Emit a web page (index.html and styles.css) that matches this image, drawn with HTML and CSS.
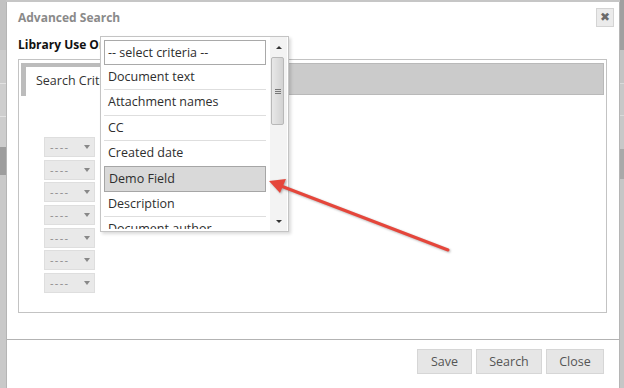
FILE: index.html
```html
<!DOCTYPE html>
<html>
<head>
<meta charset="utf-8">
<title>Advanced Search</title>
<link rel="stylesheet" href="styles.css">
</head>
<body>
<div class="screen">
  <div class="bg-col bg-left">
    <div class="blk l1"></div>
    <div class="blk l2"></div>
    <div class="blk ln"></div>
    <div class="blk l3"></div>
    <div class="blk ln"></div>
    <div class="blk l4"></div>
    <div class="blk l5"></div>
    <div class="blk lrest"></div>
  </div>

  <div class="modal">
    <div class="modal-head">
      <div class="modal-title">Advanced Search</div>
      <div class="close-btn">✖</div>
    </div>
    <div class="lib-label">Library Use Only</div>
    <div class="panel">
      <div class="tabbar">
        <div class="tab">Search Criteria</div>
      </div>
      <div class="criteria">
        <div class="mini-select"><span class="dash">----</span><i class="caret"></i></div>
        <div class="mini-select"><span class="dash">----</span><i class="caret"></i></div>
        <div class="mini-select"><span class="dash">----</span><i class="caret"></i></div>
        <div class="mini-select"><span class="dash">----</span><i class="caret"></i></div>
        <div class="mini-select"><span class="dash">----</span><i class="caret"></i></div>
        <div class="mini-select"><span class="dash">----</span><i class="caret"></i></div>
        <div class="mini-select"><span class="dash">----</span><i class="caret"></i></div>
      </div>
    </div>
    <div class="foot-line"></div>
    <div class="modal-foot">
      <button class="btn btn-save">Save</button>
      <button class="btn btn-search">Search</button>
      <button class="btn btn-close">Close</button>
    </div>
  </div>

  <div class="bg-col bg-right">
    <div class="blk r1"></div>
    <div class="blk r2"></div>
    <div class="blk rn"></div>
    <div class="blk r3"></div>
    <div class="blk rn"></div>
    <div class="blk r4"></div>
    <div class="blk r5"></div>
    <div class="blk rrest"></div>
  </div>
</div>

<div class="dropdown">
  <div class="opt-list">
    <div class="opt opt-first">-- select criteria --</div>
    <div class="opt">Document text</div>
    <div class="opt">Attachment names</div>
    <div class="opt">CC</div>
    <div class="opt">Created date</div>
    <div class="opt opt-sel">Demo Field</div>
    <div class="opt">Description</div>
    <div class="opt">Document author</div>
  </div>
  <div class="scrollbar">
    <div class="sb-btn"><i class="tri-up"></i></div>
    <div class="sb-thumb"><i class="grip"></i><i class="grip"></i><i class="grip"></i></div>
    <div class="sb-space"></div>
    <div class="sb-btn"><i class="tri-down"></i></div>
  </div>
</div>

<svg class="arrow" width="624" height="388" viewBox="0 0 624 388">
  <line x1="448" y1="250" x2="281" y2="186" stroke="#e5463b" stroke-width="3" stroke-linecap="round"/>
  <polygon points="269,181 286,179 280,193" fill="#e5463b"/>
</svg>
</body>
</html>
```

FILE: styles.css
```css
* { box-sizing: border-box; }
html, body { margin: 0; padding: 0; }
body {
  width: 624px;
  height: 388px;
  overflow: hidden;
  position: relative;
  background: #c6c6c6;
  font-family: "Open Sans", "Noto Sans", sans-serif;
  color: #333;
}

.screen { display: flex; align-items: flex-start; height: 388px; }

.bg-col { display: flex; flex-direction: column; height: 388px; }
.bg-left { width: 6px; }
.bg-right { width: 4px; }
.blk { flex: none; }
.l1 { height: 50px; background: #c2c2c2; }
.l2 { height: 33px; background: #cbcbcb; }
.ln { height: 1px; background: #e2e2e2; }
.l3 { height: 32px; background: #cecece; }
.l4 { height: 30px; background: #cdcdcd; }
.l5 { height: 28px; background: #9d9d9d; }
.lrest { flex: 1; background: #c9c9c9; }
.r1 { height: 50px; background: #a0a0a0; }
.r2 { height: 33px; background: #c4c4c4; }
.rn { height: 1px; background: #dadada; }
.r3 { height: 31px; background: #c8c8c8; }
.r4 { height: 33px; background: #c8c8c8; }
.r5 { height: 30px; background: #a9a9a9; }
.rrest { flex: 1; background: #c6c6c6; }

.modal {
  width: 614px;
  height: 386px;
  margin-top: 2px;
  background: #fff;
  border-left: 1px solid #b5b5b5;
  border-right: 1px solid #b5b5b5;
  display: flex;
  flex-direction: column;
}

.modal-head {
  display: flex;
  justify-content: space-between;
  align-items: flex-start;
  padding: 6px 5px 0 11px;
}
.modal-title {
  margin-top: 1px;
  font-size: 12px;
  font-weight: bold;
  line-height: 18px;
  color: #8a8a8a;
}
.close-btn {
  width: 18px;
  height: 19px;
  background: #ebebeb;
  border: 1px solid #d4d4d4;
  font-family: "DejaVu Sans", sans-serif;
  font-size: 12px;
  line-height: 17px;
  text-align: center;
  color: #6a6a6a;
}

.lib-label {
  margin: 9px 0 0 11px;
  font-size: 12px;
  font-weight: bold;
  line-height: 18px;
  height: 17px;
  color: #111;
  white-space: nowrap;
}

.panel {
  margin: 6px 0 0 11px;
  width: 589px;
  height: 254px;
  border: 1px solid #c3c3c3;
  padding: 3px 2px 0 2px;
}
.tabbar {
  height: 32px;
  background: #cbcbcb;
  border: 1px solid #b9b9b9;
  display: flex;
}
.tab {
  margin: -1px 0 -1px -1px;
  height: 33px;
  width: 150px;
  background: #fff;
  border-top: 4px solid #bcbcbc;
  border-left: 5px solid #bcbcbc;
  border-right: 1px solid #bcbcbc;
  padding-left: 10px;
  font-size: 12.5px;
  line-height: 28px;
  color: #333;
  white-space: nowrap;
}
.criteria {
  padding: 42px 0 0 23px;
  display: flex;
  flex-direction: column;
  gap: 2.67px;
}
.mini-select {
  width: 51px;
  height: 20px;
  background: #e9e9e9;
  border: 1px solid #dedede;
  display: flex;
  align-items: center;
  justify-content: space-between;
  padding: 0 4px 0 5px;
}
.dash {
  font-size: 11px;
  line-height: 12px;
  letter-spacing: 1.3px;
  color: #8a8a8a;
}
.caret {
  width: 0;
  height: 0;
  border-left: 3.5px solid transparent;
  border-right: 3.5px solid transparent;
  border-top: 4px solid #888;
}

.foot-line {
  margin-top: 26px;
  height: 1px;
  background: #b3b3b3;
}
.modal-foot {
  display: flex;
  justify-content: flex-end;
  gap: 4px;
  padding: 9px 15px 0 0;
}
.btn {
  height: 25px;
  background: #e6e6e6;
  border: 1px solid #d6d6d6;
  font-family: "Open Sans", "Noto Sans", sans-serif;
  font-size: 12.5px;
  color: #555;
  padding: 0;
  line-height: 22px;
}
.btn-save { width: 55px; }
.btn-search { width: 66px; }
.btn-close { width: 58px; }

/* dropdown overlay */
.dropdown {
  position: absolute;
  left: 100px;
  top: 36px;
  width: 189px;
  height: 196px;
  background: #fff;
  border: 1px solid #c4c4c4;
  box-shadow: 2px 2px 3px rgba(0, 0, 0, 0.15);
  display: flex;
  padding: 3px 0 0 3px;
  overflow: hidden;
}
.opt-list {
  width: 162px;
  height: 189px;
  overflow: hidden;
  flex: none;
}
.opt {
  height: 25.4px;
  border-bottom: 1px solid #dedede;
  padding-left: 4px;
  font-size: 12.5px;
  line-height: 24px;
  color: #2e2e2e;
  white-space: nowrap;
}
.opt-first {
  height: 25px;
  border: 1px solid #a9a9a9;
  padding-left: 3px;
  line-height: 23px;
}
.opt-sel {
  height: 26px;
  background: #d9d9d9;
  border: 1px solid #a6a6a6;
  padding-left: 4px;
  line-height: 24px;
  margin-top: -1px;
}
.scrollbar {
  margin: -3px 0 0 4px;
  width: 17px;
  height: 194px;
  background: #f3f3f3;
  display: flex;
  flex-direction: column;
  align-items: center;
}
.sb-btn {
  height: 20px;
  width: 17px;
  display: flex;
  align-items: center;
  justify-content: center;
}
.tri-up {
  width: 0; height: 0;
  border-left: 3px solid transparent;
  border-right: 3px solid transparent;
  border-bottom: 3px solid #333;
}
.tri-down {
  width: 0; height: 0;
  border-left: 3px solid transparent;
  border-right: 3px solid transparent;
  border-top: 3px solid #333;
}
.sb-thumb {
  width: 13px;
  height: 68px;
  margin-right: 2px;
  border: 1px solid #b8b8b8;
  border-radius: 2px;
  background: linear-gradient(to right, #e8e8e8, #d2d2d2);
  display: flex;
  flex-direction: column;
  align-items: center;
  justify-content: center;
  gap: 1px;
}
.grip {
  width: 6px;
  height: 1px;
  background: #777;
}
.sb-space { flex: 1; }

.arrow {
  position: absolute;
  left: 0;
  top: 0;
  pointer-events: none;
  filter: drop-shadow(1px 1px 1px rgba(0, 0, 0, 0.3));
}
```
